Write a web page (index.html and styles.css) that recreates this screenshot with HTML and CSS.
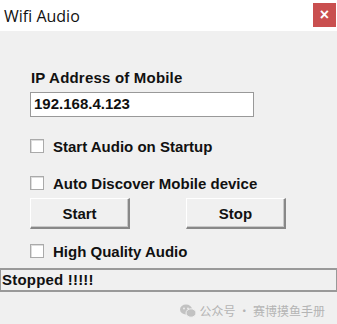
FILE: index.html
```html
<!DOCTYPE html>
<html>
<head>
<meta charset="utf-8">
<link rel="stylesheet" href="styles.css">
</head>
<body>
<div class="window">
  <div class="titlebar">
    <span class="title">Wifi Audio</span>
    <span class="close">×</span>
  </div>
  <div class="content">
    <div class="label">IP Address of Mobile</div>
    <div class="input">192.168.4.123</div>
    <div class="check c1"><span class="box"></span><span>Start Audio on Startup</span></div>
    <div class="check c2"><span class="box"></span><span>Auto Discover Mobile device</span></div>
    <div class="buttons">
      <div class="btn">Start</div>
      <div class="btn">Stop</div>
    </div>
    <div class="check c3"><span class="box"></span><span>High Quality Audio</span></div>
  </div>
  <div class="status">Stopped !!!!!</div>
  <div class="footer">
    <svg class="wx" width="16" height="14" viewBox="0 0 16 14">
      <ellipse cx="6" cy="5.5" rx="6" ry="5" fill="#c2c2c2"/>
      <ellipse cx="11" cy="9" rx="5" ry="4.2" fill="#c2c2c2" stroke="#f0f0f0" stroke-width="1"/>
      <circle cx="4" cy="4.5" r="0.9" fill="#f0f0f0"/>
      <circle cx="8" cy="4.5" r="0.9" fill="#f0f0f0"/>
    </svg>
    <span>公众号 · 赛博摸鱼手册</span>
  </div>
</div>
</body>
</html>
```
FILE: styles.css
```css
html, body { margin: 0; padding: 0; }
body { width: 337px; height: 324px; background: #f0f0f0; overflow: hidden; font-family: "Liberation Sans", Arial, sans-serif; }
.window { display: flex; flex-direction: column; height: 324px; }
.titlebar { height: 31px; background: #ffffff; display: flex; align-items: center; justify-content: space-between; padding: 0 1px 0 4px; box-sizing: border-box; }
.title { font-family: "Open Sans", "Noto Sans", sans-serif; font-size: 16px; color: #111; }
.close { width: 23px; height: 24px; margin-top: -1px; background: #c94f4f; color: #fff; font-size: 16px; font-weight: bold; display: flex; align-items: center; justify-content: center; }
.content { padding: 38px 0 0 30px; display: flex; flex-direction: column; font-weight: bold; font-size: 15px; color: #111; }
.label { padding-left: 1px; height: 23px; line-height: 18px; letter-spacing: 0.2px; }
.input { width: 224px; height: 25px; box-sizing: border-box; border: 1px solid #999; background: #fff; padding-left: 3px; line-height: 22px; }
.check { display: flex; align-items: center; gap: 9px; height: 16px; }
.c1 { margin-top: 21px; }
.c2 { margin-top: 21px; }
.c3 { margin-top: 14px; }
.box { width: 14px; height: 14px; border: 1px solid #aaa; background: #fff; box-sizing: border-box; box-shadow: inset 1px 1px 0 #ddd; }
.buttons { display: flex; gap: 56px; margin-top: 7px; }
.btn { width: 100px; height: 31px; box-sizing: border-box; background: #f0f0f0; border-top: 1px solid #fff; border-left: 1px solid #fff; border-right: 2px solid #888; border-bottom: 2px solid #888; box-shadow: inset -1px -1px 0 #c8c8c8; display: flex; align-items: center; justify-content: center; }
.status { margin-top: 9px; height: 24px; box-sizing: border-box; border-top: 2px solid #999; border-bottom: 2px solid #999; border-left: 1px solid #999; border-right: 1px solid #999; font-weight: bold; font-size: 15px; color: #111; padding-left: 1px; line-height: 20px; letter-spacing: 0.2px; }
.footer { display: flex; justify-content: flex-end; align-items: center; gap: 4px; padding: 10px 12px 0 0; color: #b4b4b4; font-size: 12px; font-family: "Noto Sans CJK SC", sans-serif; }
```
